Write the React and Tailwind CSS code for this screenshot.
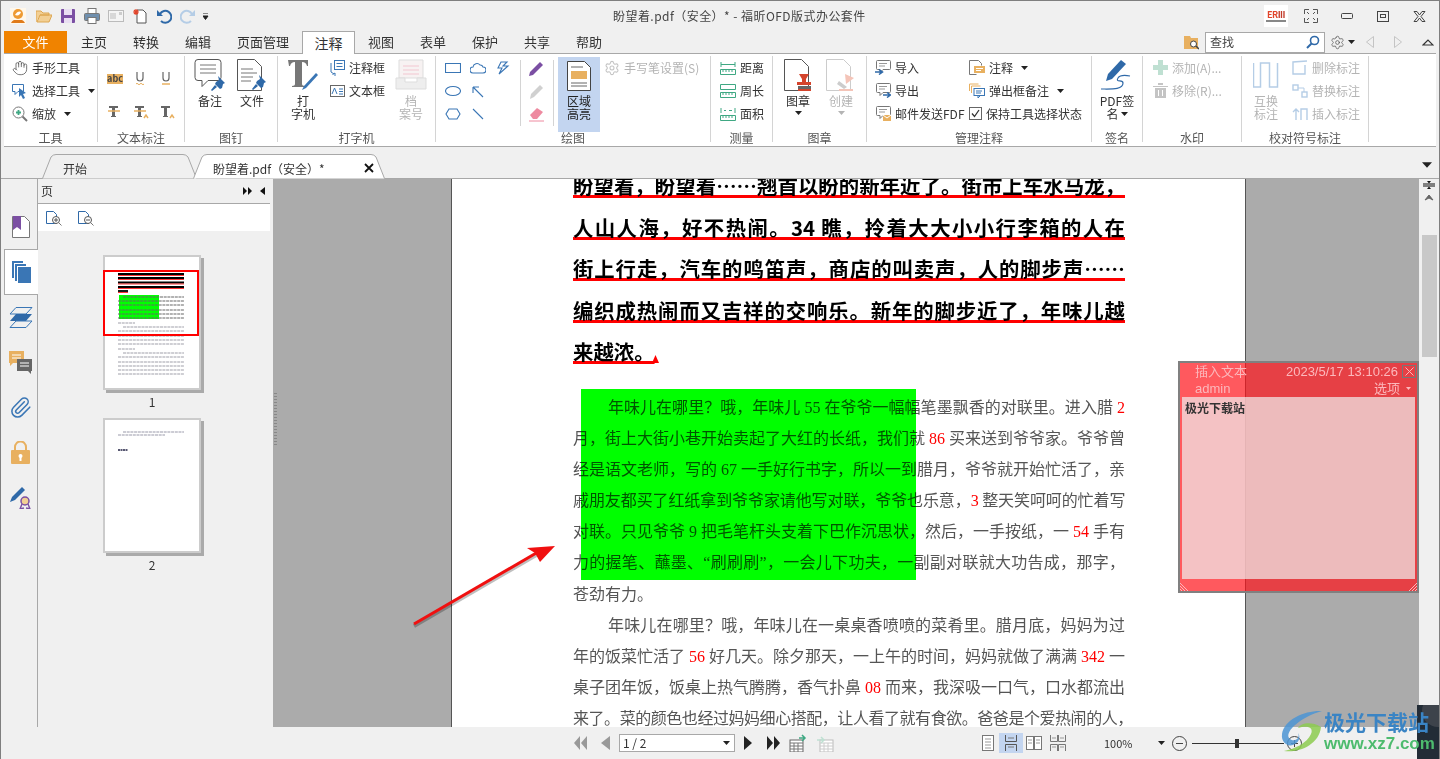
import { Hand, Settings, Paperclip } from "lucide-react";

const BLUE = "#3a76b5";
const ORANGE = "#e8b060";
const PURPLE = "#7b4fa3";

function Ic({ w = 16, h = 16, children, className = "" }) {
  return (
    <svg width={w} height={h} viewBox={`0 0 ${w} ${h}`} fill="none" className={`shrink-0 ${className}`}>
      {children}
    </svg>
  );
}

function Caret({ color = "#222", className = "" }) {
  return (
    <svg width="7" height="4" viewBox="0 0 7 4" className={`shrink-0 ${className}`}>
      <path d="M0 0h7L3.500 4z" fill={color} />
    </svg>
  );
}

function Pin({ x = 0, y = 0 }) {
  return (
    <g transform={`translate(${x} ${y})`} fill="#2f69a8">
      <path d="M7 0l7 7-2 1-1 4-2 1-5-5 1-2 3-2z" />
      <path d="M4 9l2 2-5 4-1-1z" />
    </g>
  );
}

function DocShape({ stroke = "#555", fill = "#fff" }) {
  return <path d="M1.500.5h17l7 7v24h-24z" fill={fill} stroke={stroke} />;
}

function TextRow({ icon, label, caret, gray, className = "" }) {
  return (
    <div className={`flex h-[23px] items-center gap-[4px] whitespace-nowrap ${gray ? "text-[#b4b4b4]" : ""} ${className}`}>
      {icon}
      <span>{label}</span>
      {caret && <Caret className="ml-[4px]" />}
    </div>
  );
}

function BigButton({ icon, lines, caret, gray, className = "w-[42px]" }) {
  return (
    <div className={`flex shrink-0 flex-col items-center pt-[3px] leading-[13px] ${gray ? "text-[#b4b4b4]" : ""} ${className}`}>
      <div className="flex h-[32px] items-center justify-center">{icon}</div>
      <div className="mt-[3px] text-center whitespace-nowrap">
        {lines.map((l) => (
          <div key={l}>{l}</div>
        ))}
      </div>
      {caret && <Caret className="mt-[4px]" color={gray ? "#b4b4b4" : "#222"} />}
    </div>
  );
}

function Group({ label, className, children }) {
  return (
    <div className={`flex h-[86px] shrink-0 flex-col border-r border-[#d4d4d4] ${className}`}>
      <div className="flex h-[75px]">{children}</div>
      <div className="h-[11px] text-center leading-[14px] text-[#555]">{label}</div>
    </div>
  );
}

function QuickAccess() {
  return (
    <div className="flex h-[30px] items-center">
      <Ic w={16} h={16} className="ml-[9px]">
        <rect width="16" height="16" fill="#fff7ea" />
        <circle cx="8" cy="6" r="5" fill="#ee9a32" />
        <path d="M5 7c2-4 5-4 6-3-1 3-3 4-6 3z" fill="#fff" />
        <path d="M1 15c2-4 4-3 7-3s5-1 7 3z" fill="#e07b1a" />
      </Ic>
      <Ic w={16} h={14} className="ml-[10px]">
        <path d="M0 13V2h5l2 2h6v2H4L1 13h12l3-7H4" fill="#f2cf94" stroke="#dda650" />
      </Ic>
      <Ic w={14} h={14} className="ml-[9px]">
        <rect width="14" height="14" rx="1" fill="#7b4fa3" />
        <rect x="3" y="0" width="8" height="6" fill="#e9dff2" />
        <rect x="3" y="9" width="8" height="5" fill="#e9dff2" />
      </Ic>
      <Ic w={16} h={16} className="ml-[9px]">
        <rect x="4" y="0.500" width="8" height="5" fill="#fff" stroke="#777" />
        <rect x="0.500" y="5.500" width="15" height="7" rx="1" fill="#6f8fae" stroke="#777" />
        <rect x="4" y="9.500" width="8" height="6" fill="#fff" stroke="#777" />
      </Ic>
      <Ic w={16} h={12} className="ml-[8px]">
        <rect x="0.500" y="0.500" width="15" height="11" fill="#f4f4f4" stroke="#bbb" />
        <path d="M2 4h6M2 6h6M2 8h6" stroke="#bbb" />
        <rect x="11" y="2" width="3" height="3" fill="#ccc" />
      </Ic>
      <Ic w={15} h={16} className="ml-[8px]">
        <path d="M5 2h6l3 3v10H5z" fill="#fff" stroke="#555" />
        <path d="M4 1v6M1 4h6M2 2l4 4M6 2L2 6" stroke="#e2452b" strokeWidth="1.200" />
      </Ic>
      <Ic w={16} h={16} className="ml-[9px]">
        <path d="M4 6a6 6 0 1 1 1 7" stroke="#2f69a8" strokeWidth="2" />
        <path d="M1 2v6h6z" fill="#2f69a8" />
      </Ic>
      <Ic w={16} h={16} className="ml-[8px]">
        <path d="M12 6a6 6 0 1 0-1 7" stroke="#b5cde6" strokeWidth="2" />
        <path d="M15 2v6H9z" fill="#b5cde6" />
      </Ic>
      <Ic w={6} h={7} className="ml-[7px]">
        <path d="M0 0h5M0 3h5L2.500 6.500z" stroke="#222" fill="#222" strokeWidth="1" />
      </Ic>
    </div>
  );
}

function TitleBar() {
  return (
    <div className="flex h-[30px] items-center text-[#444]">
      <div className="w-[612px]">
        <QuickAccess />
      </div>
      <div className="tracking-[0.45px] whitespace-nowrap">盼望着.pdf（安全）* - 福昕OFD版式办公套件</div>
      <div className="ml-auto flex items-center">
        <div className="flex h-[22px] w-[24px] flex-col items-center justify-center bg-white">
          <div className="text-[9px] leading-[9px] font-bold tracking-[-0.5px]">
            <span className="text-[#e2452b]">ER</span>
            <span className="text-[#c23b2a]">III</span>
          </div>
          <div className="mt-[1px] h-[2px] w-[20px] bg-[#888]" />
        </div>
        <Ic w={14} h={14} className="ml-[16px]">
          <path d="M.5 5V.5H5M9 .5h4.500V5M13.500 9v4.500H9M5 13.500H.5V9" stroke="#555" />
          <path d="M3 3l2 2M11 3L9 5M11 11L9 9M3 11l2-2" stroke="#555" />
        </Ic>
        <Ic w={12} h={6} className="ml-[23px]">
          <rect x="0.500" y="0.500" width="11" height="5" rx="1" stroke="#444" />
        </Ic>
        <Ic w={12} h={11} className="ml-[24px]">
          <rect x="0.500" y="0.500" width="11" height="10" stroke="#444" />
          <rect x="3.500" y="3.500" width="5" height="3" stroke="#444" />
        </Ic>
        <Ic w={13} h={11} className="mr-[13px] ml-[24px]">
          <path d="M1 .5h3L6.500 4 9 .5h3L8 5.500l4 5H9L6.500 7 4 10.500H1l4-5z" stroke="#444" />
        </Ic>
      </div>
    </div>
  );
}

const TABS = [
  ["主页", "w-[52px]"],
  ["转换", "w-[52px]"],
  ["编辑", "w-[52px]"],
  ["页面管理", "w-[78px]"],
];
const TABS_AFTER = ["视图", "表单", "保护", "共享", "帮助"];

function MenuTabs() {
  return (
    <div className="flex h-[22px] items-center pl-[3px] text-[13px] text-[#333]">
      <div className="flex h-[22px] w-[63px] items-center justify-center bg-[#f08300] text-white">文件</div>
      <div className="w-px" />
      {TABS.map(([t, w]) => (
        <div key={t} className={`text-center ${w}`}>
          {t}
        </div>
      ))}
      <div className="relative z-10 -mb-px flex h-[23px] w-[53px] items-center justify-center self-start border border-b-0 border-[#a8a8a8] bg-white text-[14px]">
        注释
      </div>
      {TABS_AFTER.map((t) => (
        <div key={t} className="w-[52px] text-center">
          {t}
        </div>
      ))}
      <div className="ml-auto flex items-center text-[#444]">
        <Ic w={15} h={15}>
          <path d="M0 1h6l1 2h7v11H0z" fill="#e8b060" />
          <circle cx="9.500" cy="9" r="3" fill="#fff" stroke="#444" />
          <path d="M12 11l3 3" stroke="#444" strokeWidth="1.500" />
        </Ic>
        <div className="ml-[6px] flex h-[21px] w-[120px] items-center border border-[#a8a8a8] bg-white pr-[4px] pl-[4px] text-[12px]">
          <span>查找</span>
          <Ic w={14} h={14} className="ml-auto">
            <circle cx="8.500" cy="5.500" r="4" stroke="#2f69a8" strokeWidth="1.600" />
            <path d="M5.500 8.500L1 13" stroke="#2f69a8" strokeWidth="2" />
          </Ic>
        </div>
        <Settings size={15} strokeWidth={1.2} className="ml-[5px] text-[#555]" />
        <Caret className="ml-[3px]" />
        <Ic w={8} h={12} className="ml-[11px]">
          <path d="M7.500.5v11L.5 6z" stroke="#c4c4c4" />
        </Ic>
        <Ic w={8} h={12} className="ml-[20px]">
          <path d="M.5.5v11L7.500 6z" stroke="#c4c4c4" />
        </Ic>
        <Ic w={12} h={8} className="mr-[5px] ml-[20px]">
          <path d="M1 7l5-5 5 5z" stroke="#333" strokeWidth="1.200" />
        </Ic>
      </div>
    </div>
  );
}

function AbcIcon({ kind }) {
  if (kind === "abc")
    return (
      <div className="flex h-[10px] w-[16px] items-center justify-center bg-[#e8b060] text-[9px] leading-none font-bold text-[#444]">
        abc
      </div>
    );
  const line = {
    wavy: <path d="M3 13q1-1.500 2 0t2 0 2 0 2 0" stroke="#e8b060" />,
    under: <path d="M3 13h8" stroke="#e8b060" strokeWidth="1.500" />,
    strike: <path d="M1 7h12" stroke="#e8b060" strokeWidth="1.500" />,
    strikeIn: <path d="M1 7h12M11 14l2-3 2 3" stroke="#e8b060" strokeWidth="1.500" />,
    ins: <path d="M11 14l2-3 2 3" stroke="#e8b060" strokeWidth="1.500" />,
  }[kind];
  const glyph =
    kind === "wavy" || kind === "under" ? (
      <path d="M4 1v6a3 3 0 0 0 6 0V1" stroke="#666" strokeWidth="1.200" />
    ) : (
      <path d="M2 2h9v2H8v8h1v1H4v-1h1V4H2z" fill="#666" />
    );
  return (
    <Ic w={16} h={15}>
      {glyph}
      {line}
    </Ic>
  );
}

function Shape({ d, children }) {
  return (
    <Ic w={16} h={14}>
      {d ? <path d={d} stroke={BLUE} strokeWidth="1.100" /> : children}
    </Ic>
  );
}

function Ruler({ kind }) {
  return (
    <Ic w={16} h={14}>
      <path d="M.5 8.500h15v5H.5z" stroke="#3fa883" />
      <path d="M3 9v2M6 9v2M9 9v2M12 9v2" stroke="#3fa883" />
      {kind === 0 && <path d="M1 1v5M15 1v5M1 3.500h14" stroke="#3fa883" />}
      {kind === 1 && <path d="M.5.5h15v5H.5z" stroke="#3fa883" />}
      {kind === 2 && <path d="M1 1v5M15 1v5M4 3.500h2M9 3.500h3" stroke="#3fa883" />}
    </Ic>
  );
}

function Bubble({ arrow }) {
  return (
    <Ic w={16} h={15}>
      <path d="M2.500.5h12a1 1 0 0 1 1 1v7a1 1 0 0 1-1 1H8l-3 3v-3H2.500a1 1 0 0 1-1-1v-7a1 1 0 0 1 1-1z" stroke="#777" fill="#fff" />
      <path d="M4 3.500h8M4 6h6" stroke="#999" />
      {arrow === "in" && <path d="M0 12h7M4 9.500L7.500 12 4 14.500" stroke="#2f69a8" strokeWidth="1.500" />}
      {arrow === "out" && <path d="M8 12h7M12 9.500l3.500 2.500-3.500 2.500" stroke="#2f69a8" strokeWidth="1.500" />}
      {arrow === "mail" && (
        <g>
          <rect x="8" y="9" width="8" height="6" fill={ORANGE} />
          <path d="M8 9l4 3 4-3" stroke="#fff" />
        </g>
      )}
    </Ic>
  );
}

function Ribbon() {
  return (
    <div className="mx-[3px] flex h-[94px] border-y border-[#a8a8a8] bg-white pt-[2px] text-[#333]">
      <Group label="工具" className="w-[94px]">
        <div className="pl-[8px]">
          <TextRow icon={<Hand size={16} strokeWidth={1.2} className="text-[#555]" />} label="手形工具" />
          <TextRow
            caret
            icon={
              <Ic>
                <path d="M.5 1.500h11v7H6l-3 3v-3H.5z" stroke={BLUE} />
                <path d="M7 5l7 5-3 1 2 4-2 1-2-4-2 2z" fill={BLUE} />
              </Ic>
            }
            label="选择工具"
          />
          <TextRow
            caret
            icon={
              <Ic>
                <circle cx="6.500" cy="6.500" r="5.500" stroke="#777" />
                <path d="M4 6.500h5M6.500 4v5" stroke="#3fa883" strokeWidth="1.800" />
                <path d="M10.500 10.500L15 15" stroke="#777" strokeWidth="2" />
              </Ic>
            }
            label="缩放"
          />
        </div>
      </Group>

      <Group label="文本标注" className="w-[87px]">
        <div className="grid grid-cols-[26px_26px_26px] grid-rows-[33px_33px] items-center justify-items-center pt-[6px] pl-[4px]">
          <AbcIcon kind="abc" />
          <AbcIcon kind="wavy" />
          <AbcIcon kind="under" />
          <AbcIcon kind="strike" />
          <AbcIcon kind="strikeIn" />
          <AbcIcon kind="ins" />
        </div>
      </Group>

      <Group label="图钉" className="w-[93px]">
        <div className="flex pl-[4px]">
          <BigButton
            lines={["备注"]}
            icon={
              <Ic w={32} h={32}>
                <path d="M4 .5h20a3 3 0 0 1 3 3v15a3 3 0 0 1-3 3H14l-6 6v-6H4a3 3 0 0 1-3-3v-15a3 3 0 0 1 3-3z" stroke="#555" fill="#fff" />
                <path d="M6 6h16M6 10h16M6 14h16" stroke="#777" />
                <Pin x={17} y={17} />
              </Ic>
            }
          />
          <BigButton
            lines={["文件"]}
            icon={
              <Ic w={32} h={32}>
                <DocShape />
                <path d="M5 10h12M5 14h16M5 18h12M5 22h10" stroke="#777" />
                <Pin x={16} y={16} />
              </Ic>
            }
          />
        </div>
      </Group>

      <Group label="打字机" className="w-[158px]">
        <div className="flex pl-[4px]">
          <BigButton
            lines={["打", "字机"]}
            icon={
              <Ic w={32} h={32}>
                <path d="M1 1h20v6h-1c-1-3-2-4-5-4v22c0 1 1 2 3 2v1H5v-1c2 0 3-1 3-2V3c-3 0-4 1-5 4H2z" fill="#777" />
                <path d="M29 14l2 2-12 13-4 2 2-4z" fill={BLUE} />
              </Ic>
            }
          />
          <div className="ml-[6px] w-[60px]">
            <TextRow
              icon={
                <Ic w={15} h={16}>
                  <rect x="4.500" y="0.500" width="10" height="9" stroke={BLUE} />
                  <path d="M6.500 3.500h6M6.500 6.500h6" stroke={BLUE} />
                  <path d="M1 3v9l3 2M2.500 14.500L5 13v3" stroke={BLUE} />
                </Ic>
              }
              label="注释框"
            />
            <TextRow
              icon={
                <Ic w={15} h={12}>
                  <rect x="0.500" y="0.500" width="14" height="11" stroke="#666" />
                  <path d="M2 9l2.500-6L7 9M9 4h4M9 6.500h4M9 9h4" stroke={BLUE} />
                </Ic>
              }
              label="文本框"
            />
          </div>
          <BigButton
            gray
            lines={["档", "案号"]}
            icon={
              <Ic w={32} h={32}>
                <path d="M4 1h24v18H4z" fill="#f7f2f2" stroke="#ddd" />
                <path d="M8 7h16M8 11h16M8 15h16" stroke="#f2c6d0" />
                <path d="M1 19h9v4h12v-4h9v11H1z" fill="#eee" stroke="#ddd" />
              </Ic>
            }
          />
        </div>
      </Group>

      <Group label="绘图" className="w-[275px]">
        <div className="flex">
          <div className="grid grid-cols-[25px_25px_25px] grid-rows-[23px_23px_23px] items-center justify-items-center pl-[4px]">
            <Shape d="M.5 2.500h15v9H.5z" />
            <Shape d="M3 12a3 3 0 0 1 0-6 4 4 0 0 1 7-2 3 3 0 0 1 3 2 3 3 0 0 1 0 6z" />
            <Shape d="M6 1h6L8 5h5L4 13l3-6H3z" />
            <Shape>
              <ellipse cx="8" cy="7" rx="7.500" ry="4.500" stroke={BLUE} strokeWidth="1.100" />
            </Shape>
            <Shape d="M3 3l10 10M3 3h6M3 3v6" />
            <span />
            <Shape d="M4 2h8l3 5-3 5H4L1 7z" />
            <Shape d="M3 2l10 10" />
            <span />
          </div>
          <div className="mt-[4px] ml-[5px] h-[66px] w-px bg-[#d4d4d4]" />
          <div className="flex w-[32px] flex-col items-center">
            <div className="flex h-[23px] items-center">
              <Ic>
                <path d="M1 12L11 2l3 3L4 15l-4 1z" fill={PURPLE} />
              </Ic>
            </div>
            <div className="flex h-[23px] items-center">
              <Ic>
                <path d="M2 11L11 2l3 3-9 9-4 2z" fill="#d0d0d0" />
              </Ic>
            </div>
            <div className="flex h-[23px] items-center">
              <Ic>
                <path d="M1 9l7-7 6 4-6 7H4z" fill="#ee8aa0" />
                <path d="M0 15h15" stroke="#ee8aa0" />
              </Ic>
            </div>
          </div>
          <div className="mt-[4px] h-[66px] w-px bg-[#d4d4d4]" />
          <div className="mt-[1px] ml-[4px] flex h-[75px] w-[42px] flex-col items-center bg-[#c3d5f0] pt-[4px] leading-[13px]">
            <Ic w={24} h={30}>
              <path d="M.5.500h17l6 6v23H.5z" fill="#fff" stroke="#444" />
              <path d="M4 6h12M4 22h16M4 25h16" stroke="#666" />
              <rect x="4" y="10" width="16" height="8" fill={ORANGE} />
            </Ic>
            <div className="mt-[3px] text-center text-[#222]">
              区域
              <br />
              高亮
            </div>
          </div>
          <div className="ml-[4px]">
            <TextRow gray icon={<Settings size={16} strokeWidth={1.6} className="text-[#c4c4c4]" />} label="手写笔设置(S)" />
          </div>
        </div>
      </Group>

      <Group label="测量" className="w-[62px]">
        <div className="pl-[9px]">
          <TextRow icon={<Ruler kind={0} />} label="距离" />
          <TextRow icon={<Ruler kind={1} />} label="周长" />
          <TextRow icon={<Ruler kind={2} />} label="面积" />
        </div>
      </Group>

      <Group label="图章" className="w-[94px]">
        <div className="flex pl-[4px]">
          <BigButton
            caret
            lines={["图章"]}
            icon={
              <Ic w={30} h={32}>
                <DocShape />
                <path d="M16 15h10l-3 5v3h5v3H14v-3h5v-3z" fill="#d4442c" />
                <rect x="15" y="27" width="13" height="3" fill="#666" />
                <rect x="15" y="30" width="13" height="2" fill="#d4442c" />
              </Ic>
            }
          />
          <BigButton
            gray
            caret
            className="ml-[1px] w-[42px]"
            lines={["创建"]}
            icon={
              <Ic w={32} h={32}>
                <DocShape stroke="#ccc" />
                <path d="M20 15l9 4-8 6z" fill="#f4c4b8" />
                <path d="M14 22l8 6-3 2-7-5z" fill="#ccc" />
                <rect x="14" y="30" width="14" height="2" fill="#f4c4b8" />
              </Ic>
            }
          />
        </div>
      </Group>

      <Group label="管理注释" className="w-[225px]">
        <div className="flex pl-[8px]">
          <div className="w-[94px]">
            <TextRow icon={<Bubble arrow="in" />} label="导入" />
            <TextRow icon={<Bubble arrow="out" />} label="导出" />
            <TextRow className="-mr-[6px]" icon={<Bubble arrow="mail" />} label="邮件发送FDF" />
          </div>
          <div>
            <TextRow
              caret
              icon={
                <Ic>
                  <path d="M.5.500h9l3 3v2M.5.500v14h7" stroke="#777" />
                  <rect x="5" y="6" width="11" height="7" fill={ORANGE} />
                  <path d="M7 8.500h7M7 10.500h5" stroke="#fff" />
                </Ic>
              }
              label="注释"
            />
            <TextRow
              caret
              icon={
                <Ic>
                  <path d="M.5 8V1h9M2.500 10V3h9" stroke={ORANGE} />
                  <rect x="5" y="5.500" width="10.500" height="7" stroke={BLUE} fill="#fff" />
                  <path d="M7 8h6M7 10h5M9 13v2l2-2" stroke={BLUE} />
                </Ic>
              }
              label="弹出框备注"
            />
            <TextRow
              icon={
                <Ic w={13} h={13}>
                  <rect x="0.500" y="0.500" width="12" height="12" stroke="#666" fill="#fff" />
                  <path d="M3 6.500l2.500 3L10 3" stroke="#333" strokeWidth="1.300" />
                </Ic>
              }
              label="保持工具选择状态"
            />
          </div>
        </div>
      </Group>

      <Group label="签名" className="w-[51px]">
        <div className="flex w-full flex-col items-center pt-[3px] leading-[13px]">
          <div className="flex h-[32px] items-center">
            <Ic w={32} h={32}>
              <path d="M20 1l5 4-14 15-6 2 2-7z" fill="#2f69a8" />
              <path d="M0 30c10 0 22 1 22-6 0-4-8 0-5-5 2-3 7-3 12-2" stroke="#2f69a8" strokeWidth="1.200" />
            </Ic>
          </div>
          <div className="mt-[3px] text-center whitespace-nowrap">PDF签</div>
          <div className="flex items-center gap-[2px]">
            名<Caret />
          </div>
        </div>
      </Group>

      <Group label="水印" className="w-[99px]">
        <div className="pl-[10px]">
          <TextRow
            gray
            icon={
              <Ic w={15} h={15}>
                <path d="M5 0h5v5h5v5h-5v5H5v-5H0V5h5z" fill="#bfe0d2" />
              </Ic>
            }
            label="添加(A)..."
          />
          <TextRow
            gray
            icon={
              <Ic w={15} h={15}>
                <path d="M0 3h15v1H0zM5 0h5v2H5zM2 5h11v10H2z" fill="#c4c4c4" />
                <path d="M5.500 7v6M9.500 7v6" stroke="#fff" />
              </Ic>
            }
            label="移除(R)..."
          />
        </div>
      </Group>

      <Group label="校对符号标注" className="w-[127px]">
        <div className="flex pl-[3px]">
          <BigButton
            gray
            lines={["互换", "标注"]}
            icon={
              <Ic w={26} h={26}>
                <path d="M.5 1v24h7V1h9v24h8V1" stroke="#b5cde6" strokeWidth="1.500" />
              </Ic>
            }
          />
          <div className="ml-[5px]">
            <TextRow
              gray
              icon={
                <Ic>
                  <path d="M15 1L1 2v12h12V5" stroke="#b5cde6" strokeWidth="1.400" />
                </Ic>
              }
              label="删除标注"
            />
            <TextRow
              gray
              icon={
                <Ic>
                  <rect x="1" y="2" width="5" height="5" stroke="#b5cde6" strokeWidth="1.400" />
                  <rect x="10" y="9" width="5" height="5" stroke="#b5cde6" strokeWidth="1.400" />
                  <path d="M6 5h6v4" stroke="#b5cde6" />
                </Ic>
              }
              label="替换标注"
            />
            <TextRow
              gray
              icon={
                <Ic>
                  <path d="M1 6l3-3 3 3M4 3v11M9 14V3h6v11" stroke="#b5cde6" strokeWidth="1.400" />
                </Ic>
              }
              label="插入标注"
            />
          </div>
        </div>
      </Group>
    </div>
  );
}

function DocTabShape({ w, fill, inset }) {
  const h = 24;
  return (
    <svg width={w} height={h + 1} viewBox={`0 0 ${w} ${h + 1}`} fill="none" className="absolute top-0 left-0">
      <path
        d={`M.5 ${h + 0.5}L${inset - 2} 3Q${inset} .5 ${inset + 3} .5H${w - inset - 3}Q${w - inset} .5 ${w - inset + 2} 3L${w - 0.5} ${h + 0.5}`}
        fill={fill}
        stroke="#a8a8a8"
      />
    </svg>
  );
}

function DocTabs() {
  return (
    <div className="relative flex h-[32px] items-end border-b border-[#a8a8a8] pl-[41px] text-[#333]">
      <div className="relative h-[24px] w-[155px]">
        <DocTabShape w={155} fill="#f0f0f0" inset={11} />
        <span className="absolute top-[6px] left-[21px]">开始</span>
      </div>
      <div className="relative z-10 -mb-px -ml-[4px] h-[25px] w-[192px]">
        <DocTabShape w={192} fill="#fff" inset={11} />
        <span className="absolute top-[6px] left-[20px] whitespace-nowrap">盼望着.pdf（安全）*</span>
        <span className="absolute top-[9px] left-[171px]">
          <Ic w={10} h={10}>
            <path d="M1 1l8 8M9 1L1 9" stroke="#111" strokeWidth="1.800" />
          </Ic>
        </span>
      </div>
      <Caret className="absolute top-[15px] right-[7px] !h-[6px] !w-[10px]" />
    </div>
  );
}

const RAIL_ICONS = [
  <Ic w={18} h={22} key="book">
    <path d="M.5.500h12l5 5v16H.5z" fill="#fff" stroke="#777" />
    <path d="M1 0h8v14l-4-3-4 3z" fill={PURPLE} />
  </Ic>,
  <Ic w={19} h={22} key="pages">
    <path d="M0 0h11v2H2v15H0z" fill={BLUE} />
    <path d="M3 3h11v2H5v15H3z" fill={BLUE} />
    <rect x="6" y="6" width="13" height="16" fill={BLUE} />
  </Ic>,
  <Ic w={24} h={21} key="layers">
    <path d="M7 .5h16L17 7H1z" stroke={BLUE} />
    <path d="M7 7h16l-6 7H1z" fill="#2f69a8" />
    <path d="M7 14h16l-6 6.500H1z" stroke={BLUE} />
  </Ic>,
  <Ic w={23} h={23} key="comments">
    <path d="M0 0h15v12H4l-3 3v-3H0z" fill={ORANGE} />
    <path d="M3 4h9M3 7h9" stroke="#fff" />
    <path d="M8 8h15v12h-1v3l-3-3H8z" fill="#666" />
    <path d="M11 12h9M11 15h9" stroke="#fff" />
  </Ic>,
  <Paperclip key="clip" size={23} strokeWidth={1.6} color={BLUE} />,
  <Ic w={19} h={23} key="lock">
    <path d="M4 9V6a5.500 5.500 0 0 1 11 0v3" stroke={ORANGE} strokeWidth="2" />
    <rect y="9" width="19" height="14" rx="1" fill={ORANGE} />
    <circle cx="9.500" cy="15" r="2" fill="#fff" />
    <path d="M9.500 15v5" stroke="#fff" strokeWidth="2" />
  </Ic>,
  <Ic w={21} h={22} key="sign">
    <path d="M12 0l3 3-10 10-5 2 2-5z" fill="#2f69a8" />
    <circle cx="15" cy="14" r="4" fill="#f2cf94" stroke={PURPLE} strokeWidth="1.500" />
    <path d="M12 17l-2 5 4-1M18 17l2 5-4-1" stroke={PURPLE} strokeWidth="1.400" />
  </Ic>,
];

function LeftRail() {
  return (
    <div className="w-[36px] shrink-0 pt-[25px]">
      {RAIL_ICONS.map((icon, i) => (
        <div
          key={i}
          className={
            i === 1
              ? "relative z-10 -mr-px ml-[3px] flex h-[46px] items-center justify-center border border-r-0 border-[#a8a8a8] bg-white"
              : "ml-[3px] flex h-[45px] items-center justify-center"
          }
        >
          {icon}
        </div>
      ))}
    </div>
  );
}

const THUMB_ROWS = [40, 44, 48, 53, 57, 61, 66, 70, 74, 79, 83, 87, 92, 96, 100, 105, 109, 113, 117];

function ThumbOne() {
  return (
    <svg width="94" height="131" viewBox="0 0 94 131" fill="none" className="block overflow-visible">
      {[17, 21, 25.5, 30, 34].map((y, i) => (
        <g key={y}>
          <path d={`M13 ${y}H${i === 4 ? 23 : 79}`} stroke="#000" strokeWidth="1.800" />
          <path d={`M13 ${y + 1.500}H${i === 4 ? 23 : 79}`} stroke="#f00" strokeWidth=".8" />
        </g>
      ))}
      <rect x="14" y="38" width="40" height="24" fill="#00ff00" />
      {THUMB_ROWS.map((y, i) => (
        <path
          key={y}
          d={`M${i === 0 || i === 7 || i === 13 ? 18 : 13} ${y}H${i === 6 || i === 12 ? 30 : 79}`}
          stroke={y < 62 ? "#666" : "#a0a0aa"}
          strokeWidth="1.200"
          strokeDasharray="3 .7"
        />
      ))}
      <rect x="-1" y="14" width="94" height="64" stroke="#f00" strokeWidth="2" />
    </svg>
  );
}

function ThumbTwo() {
  return (
    <svg width="94" height="131" viewBox="0 0 94 131" fill="none" className="block">
      <path d="M18 12H79M13 15H60" stroke="#99a" strokeWidth="1.100" strokeDasharray="3 .7" />
      <path d="M13 30H23" stroke="#224" strokeWidth="1.500" strokeDasharray="2 .5" />
    </svg>
  );
}

function PagesPanel() {
  return (
    <div className="flex w-[233px] shrink-0 flex-col border-l border-[#a8a8a8] text-[#333]">
      <div className="flex h-[24px] items-center pr-[5px] pl-[3px]">
        <span>页</span>
        <Ic w={9} h={8} className="ml-auto">
          <path d="M0 0l4 4-4 4zM5 0l4 4-4 4z" fill="#111" />
        </Ic>
        <Ic w={5} h={8} className="ml-[8px]">
          <path d="M5 0v8L0 4z" fill="#111" />
        </Ic>
      </div>
      <div className="flex h-[28px] items-center gap-[16px] border-t border-[#a8a8a8] bg-white pl-[8px]">
        <Ic>
          <path d="M.5 1.500h7l3 3v9H.5z" stroke="#2f69a8" />
          <circle cx="10" cy="10" r="3.500" stroke="#555" fill="#fff" />
          <path d="M8 10h4M10 8v4" stroke="#555" />
          <path d="M13 13l2.500 2.500" stroke="#777" />
        </Ic>
        <Ic>
          <path d="M.5 1.500h7l3 3v9H.5z" stroke="#2f69a8" />
          <circle cx="10" cy="10" r="3.500" stroke="#555" fill="#fff" />
          <path d="M8 10h4" stroke="#555" />
          <path d="M13 13l2.500 2.500" stroke="#777" />
        </Ic>
      </div>
      <div className="flex flex-col pt-[24px] pl-[65px]">
        <div className="w-[98px] border-2 border-[#ccc] bg-white shadow-[3px_3px_0_#aaa]">
          <ThumbOne />
        </div>
        <div className="flex h-[28px] w-[98px] items-start justify-center pt-[4px] leading-[16px]">1</div>
        <div className="w-[98px] border-2 border-[#ccc] bg-white shadow-[3px_3px_0_#aaa]">
          <ThumbTwo />
        </div>
        <div className="flex h-[28px] w-[98px] items-start justify-center pt-[4px] leading-[16px]">2</div>
      </div>
    </div>
  );
}

const HEADING = [
  "盼望着，盼望着……翘首以盼的新年近了。街市上车水马龙，",
  "人山人海，好不热闹。34 瞧，拎着大大小小行李箱的人在",
  "街上行走，汽车的鸣笛声，商店的叫卖声，人的脚步声……",
  "编织成热闹而又吉祥的交响乐。新年的脚步近了，年味儿越",
  "来越浓。",
];

// [text, indent, last, tight]; *n* marks a red number
const BODY = [
  ["年味儿在哪里？哦，年味儿 55 在爷爷一幅幅笔墨飘香的对联里。进入腊 *2*", true],
  ["月，街上大街小巷开始卖起了大红的长纸，我们就 *86* 买来送到爷爷家。爷爷曾"],
  ["经是语文老师，写的 67 一手好行书字，所以一到腊月，爷爷就开始忙活了，亲"],
  ["戚朋友都买了红纸拿到爷爷家请他写对联，爷爷也乐意，*3* 整天笑呵呵的忙着写", false, false, true],
  ["对联。只见爷爷 9 把毛笔杆头支着下巴作沉思状，然后，一手按纸，一 *54* 手有"],
  ["力的握笔、蘸墨、“刷刷刷”，一会儿下功夫，一副副对联就大功告成，那字，"],
  ["苍劲有力。", false, true],
  ["年味儿在哪里？哦，年味儿在一桌桌香喷喷的菜肴里。腊月底，妈妈为过", true],
  ["年的饭菜忙活了 *56* 好几天。除夕那天，一上午的时间，妈妈就做了满满 *342* 一"],
  ["桌子团年饭，饭桌上热气腾腾，香气扑鼻 *08* 而来，我深吸一口气，口水都流出"],
  ["来了。菜的颜色也经过妈妈细心搭配，让人看了就有食欲。爸爸是个爱热闹的人，", false, false, true],
];

function BodyLine({ text, indent, last, tight }) {
  const parts = text.split("*");
  return (
    <p
      className={`h-[31.2px] leading-[31.2px] whitespace-nowrap ${last ? "" : "[text-align-last:justify]"} ${indent ? "pl-[35px]" : ""} ${tight ? "tracking-[-0.45px]" : ""}`}
    >
      {parts.map((p, i) =>
        i % 2 ? (
          <span key={i} className="text-[#f00]">
            {p}
          </span>
        ) : (
          <span key={i}>{p}</span>
        )
      )}
    </p>
  );
}

function DocPage() {
  return (
    <div className="relative h-full flex-1 overflow-hidden bg-[#ababab]">
      <div className="ml-[178px] h-full w-[795px] overflow-hidden border-x border-[#555] bg-white pl-[121px]">
        <div className="w-[552px]">
          <div className="-mt-[14px] text-[20.4px] font-bold text-black">
            {HEADING.map((h, i) => (
              <p
                key={h}
                className={`h-[41.5px] leading-[41.5px] whitespace-nowrap underline decoration-[#f00] decoration-[3px] underline-offset-[1px] ${i < 4 ? "[text-align-last:justify]" : ""}`}
              >
                {h}
              </p>
            ))}
          </div>
          <div className="mt-[19px] font-['Liberation_Serif','Noto_Sans_CJK_SC',serif] text-[16px] text-[#555]">
            {BODY.map(([t, indent, last, tight]) => (
              <BodyLine key={t} text={t} indent={indent} last={last} tight={tight} />
            ))}
          </div>
        </div>
      </div>

      {/* red tick after the last heading line */}
      <svg width="7" height="8" viewBox="0 0 7 8" className="absolute top-[176px] left-[379px]">
        <path d="M3.500 0L7 8H0z" fill="#f00" />
      </svg>

      {/* area highlight */}
      <div className="absolute top-[210px] left-[308px] h-[191px] w-[335px] bg-[#00ff00] mix-blend-multiply" />

      {/* red arrow */}
      <svg width="160" height="100" viewBox="0 0 160 100" fill="none" className="absolute top-[360px] left-[135px]">
        <path d="M6 87L130 15" stroke="#000" strokeOpacity=".25" strokeWidth="4" />
        <path d="M6 85L130 13" stroke="#f01010" strokeWidth="3" />
        <path d="M147 7l-28 2 8 5 5 9z" fill="#f01010" />
      </svg>

      {/* grip of the pane splitter */}
      <div className="absolute top-[214px] left-[1px] h-[52px] w-[3px] bg-[repeating-linear-gradient(#888_0_1px,transparent_1px_3px)]" />

      <NotePopup />
    </div>
  );
}

function NotePopup() {
  return (
    <div className="absolute top-[182px] left-[905px] flex h-[232px] w-[241px] flex-col border-2 border-[#808080] bg-[#ff131a]/70 font-['Liberation_Sans','Noto_Sans_CJK_SC',sans-serif] text-[13px] text-[#fcb8bc]">
      <div className="flex h-[17px] items-center pr-[1px] pl-[15px]">
        <span>插入文本</span>
        <span className="ml-auto">2023/5/17 13:10:26</span>
        <div className="ml-[4px] flex h-[13px] w-[14px] items-center justify-center border border-[#777]">
          <Ic w={9} h={9}>
            <path d="M.5.500l8 8M8.500.500l-8 8" stroke="#fcb8bc" />
          </Ic>
        </div>
      </div>
      <div className="flex h-[17px] items-center pr-[6px] pl-[15px]">
        <span>admin</span>
        <span className="ml-auto">选项</span>
        <Caret color="#fcb8bc" className="ml-[6px] !h-[3px] !w-[5px]" />
      </div>
      <div className="mx-[2px] h-[182px] bg-[#f0f0f0]/70 px-[3px] pt-[3px] text-[12px] font-bold text-[#333]">
        极光下载站
      </div>
      <svg width="8" height="8" viewBox="0 0 8 8" className="absolute right-0 bottom-0" stroke="#fcb8bc">
        <path d="M0 8l8-8M3 8l5-5M6 8l2-2" />
      </svg>
      <svg width="8" height="8" viewBox="0 0 8 8" className="absolute bottom-0 left-0" stroke="#fcb8bc">
        <path d="M0 0l8 8M0 3l5 5M0 6l2 2" />
      </svg>
    </div>
  );
}

function ScrollColumn() {
  return (
    <div className="flex w-[20px] shrink-0 flex-col items-center bg-[#f0f0f0]">
      <Ic w={12} h={10} className="mt-[1px]">
        <path d="M0 4h12M0 6h12" stroke="#111" />
        <path d="M4 1h4L6 3.500zM4 9h4L6 6.500z" fill="#111" />
      </Ic>
      <Ic w={10} h={7} className="mt-[4px]">
        <path d="M1 6l4-5 4 5-4-2z" fill="#666" stroke="#666" />
      </Ic>
      <div className="mt-[34px] h-[122px] w-[15px] bg-[#c8c8c8]" />
    </div>
  );
}

function ViewIcon({ kind }) {
  return (
    <Ic w={16} h={16}>
      {kind === 0 && (
        <>
          <rect x="2.500" y="0.500" width="11" height="15" stroke="#777" fill="#fff" />
          <path d="M5 4h6M5 7h6M5 10h6M5 13h6" stroke="#999" />
        </>
      )}
      {kind === 1 && (
        <>
          <path d="M2.500 0v6.500h11V0M2.500 16V9.500h11V16" stroke="#555" />
          <path d="M5 3h6M5 12h6" stroke="#777" />
        </>
      )}
      {kind === 2 && (
        <>
          <rect x="0.500" y="1.500" width="7" height="13" stroke="#777" fill="#fff" />
          <rect x="8.500" y="1.500" width="7" height="13" stroke="#777" fill="#fff" />
          <path d="M2 5h4M2 8h4M10 5h4M10 8h4" stroke="#999" />
        </>
      )}
      {kind === 3 && (
        <>
          <path d="M.5 0v6.500h7V0M8.500 0v6.500h7V0M.5 16V9.500h7V16M8.500 16V9.500h7V16" stroke="#777" />
          <path d="M2 3h4M10 3h4M2 12h4M10 12h4" stroke="#999" />
        </>
      )}
    </Ic>
  );
}

function StatusBar() {
  return (
    <div className="flex h-[32px] items-center bg-[#f0f0f0] pl-[573px] text-[11px] text-[#333]">
      <Ic w={13} h={14}>
        <path d="M0 7l6-7v14zM13 0v14L7 7z" fill="#999" />
      </Ic>
      <Ic w={9} h={14} className="ml-[14px]">
        <path d="M9 0v14L0 7z" fill="#999" />
      </Ic>
      <div className="ml-[9px] flex h-[18px] w-[116px] items-center border border-[#a8a8a8] bg-white pr-[4px] pl-[3px] text-[12px]">
        <span>1 / 2</span>
        <Caret className="ml-auto" />
      </div>
      <Ic w={8} h={14} className="ml-[9px]">
        <path d="M0 0v14l8-7z" fill="#222" />
      </Ic>
      <Ic w={13} h={14} className="ml-[15px]">
        <path d="M0 0v14l6-7zM7 0v14l6-7z" fill="#222" />
      </Ic>
      <Ic w={18} h={18} className="ml-[9px]">
        <rect x="1" y="6" width="13" height="12" fill="#fff" stroke="#666" />
        <path d="M1 9h13M5 9v9M9 9v9M1 12h13M1 15h13" stroke="#777" />
        <path d="M10 4h6M13 1l3 3-3 3" stroke="#3fa883" strokeWidth="1.500" />
      </Ic>
      <Ic w={18} h={18} className="ml-[9px]">
        <rect x="4" y="6" width="13" height="12" fill="#fff" stroke="#bbb" />
        <path d="M4 9h13M8 9v9M12 9v9M4 12h13M4 15h13" stroke="#ccc" />
        <path d="M1 6h7M5 3l3 3-3 3" stroke="#bfe0d2" strokeWidth="1.500" />
      </Ic>
      <div className="ml-[146px] flex items-center">
        <ViewIcon kind={0} />
        <div className="mx-[3px] flex h-[20px] w-[24px] items-center justify-center bg-[#c3d5f0]">
          <ViewIcon kind={1} />
        </div>
        <ViewIcon kind={2} />
        <div className="ml-[8px]">
          <ViewIcon kind={3} />
        </div>
      </div>
      <span className="ml-[38px]">100%</span>
      <Caret className="ml-[26px]" />
      <Ic w={15} h={15} className="ml-[7px]">
        <circle cx="7.500" cy="7.500" r="7" stroke="#444" />
        <path d="M4 7.500h7" stroke="#444" />
      </Ic>
      <div className="relative ml-[5px] h-px w-[92px] bg-[#333]">
        <div className="absolute top-[-4px] left-[43px] h-[9px] w-[4px] bg-[#333]" />
      </div>
      <Ic w={15} h={15} className="ml-[3px]">
        <circle cx="7.500" cy="7.500" r="7" stroke="#444" />
        <path d="M4 7.500h7M7.500 4v7" stroke="#444" />
      </Ic>
    </div>
  );
}

function Watermark() {
  return (
    <div className="absolute right-0 bottom-0 h-[54px] w-[158px]">
      <div className="absolute top-0 right-0 h-[54px] w-[22px] overflow-hidden bg-[#222c36]">
        <div className="absolute -top-[10px] left-[5px] h-[32px] w-[32px] rounded-full bg-[#3d434b]" />
      </div>
      <div className="relative flex items-start">
        <svg width="42" height="46" viewBox="0 0 42 46" fill="none" className="mt-[2px] shrink-0">
          <path d="M41 4C25 3 3 12 1 27c-1 8 5 13 11 11 6-2 8-8 5-12 3 6-5 10-9 5C4 24 20 10 41 4z" fill="#4b94d4" opacity=".85" />
          <path d="M40 20c-10-6-20-4-23 1 9-3 16-1 13 6-4 9-16 15-27 17 15 2 35-6 37-24z" fill="#8ccb4f" opacity=".85" />
        </svg>
        <div className="ml-[1px] w-[116px]">
          <div className="mt-[3px] text-[21px] leading-[26px] font-bold whitespace-nowrap text-[#3a84c4]">极光下载站</div>
          <div className="font-['Liberation_Sans',sans-serif] text-[17px] leading-[20px] font-bold whitespace-nowrap text-[#4dbb6e]">www.xz7.com</div>
        </div>
      </div>
    </div>
  );
}

export default function App() {
  return (
    <div className="relative isolate h-[759px] w-[1440px] overflow-hidden border-x border-t border-[#7f7f7f] bg-[#f0f0f0] font-['Noto_Sans_CJK_SC',sans-serif] text-[12px]">
      <TitleBar />
      <MenuTabs />
      <Ribbon />
      <DocTabs />
      <div className="flex h-[548px]">
        <LeftRail />
        <PagesPanel />
        <div className="w-[3px] shrink-0" />
        <DocPage />
        <ScrollColumn />
      </div>
      <StatusBar />
      <Watermark />
    </div>
  );
}
